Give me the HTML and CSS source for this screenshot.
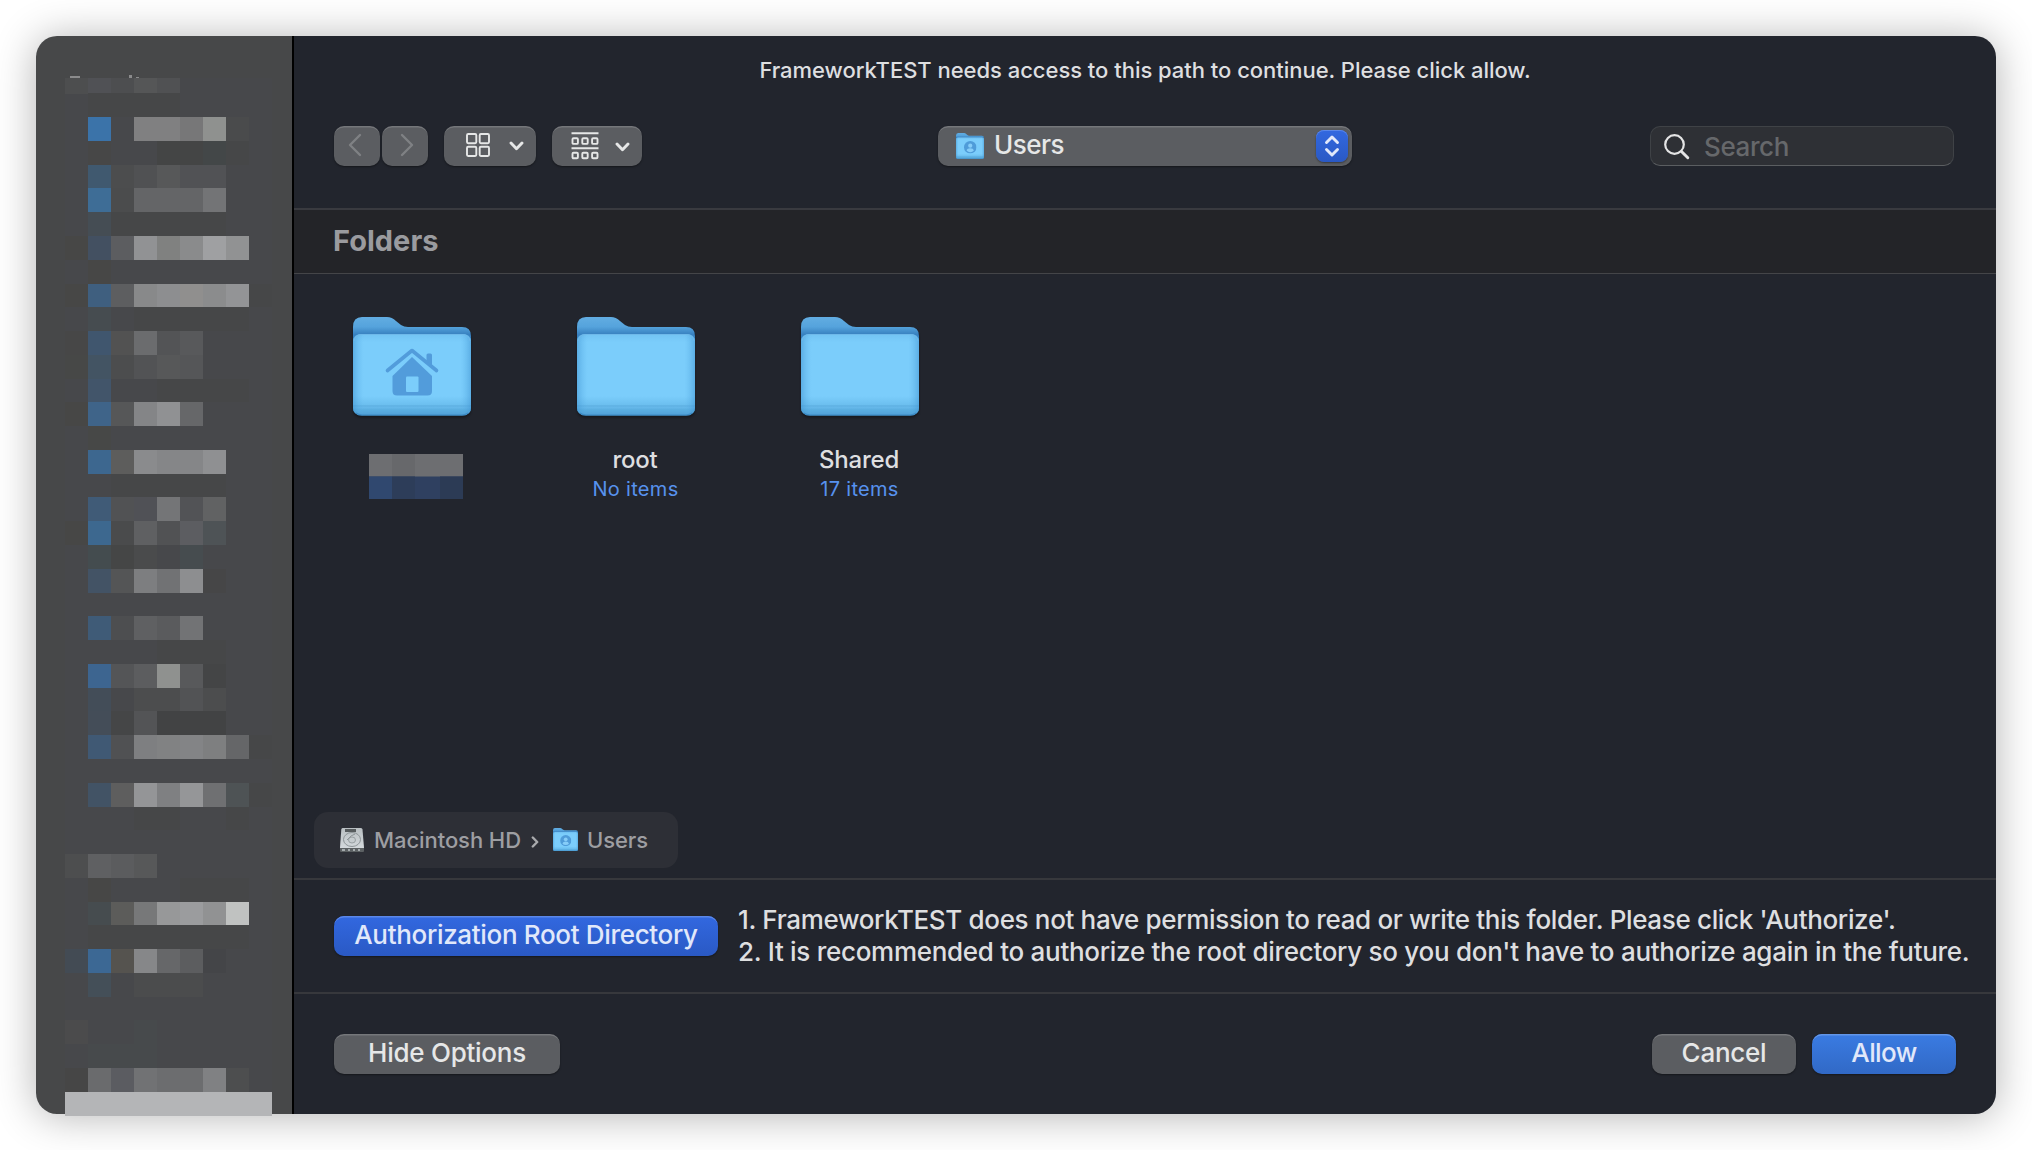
FILE: index.html
```html
<!DOCTYPE html>
<html lang="en">
<head>
<meta charset="utf-8">
<title>Open</title>
<link rel="stylesheet" href="styles.css">
</head>
<body>
<svg class="defs" aria-hidden="true">
  <defs>
    <linearGradient id="back" x1="0" y1="0" x2="0" y2="1">
      <stop offset="0" stop-color="#62ade2"/><stop offset=".1" stop-color="#55a3dc"/><stop offset=".18" stop-color="#3780bf"/><stop offset="1" stop-color="#4a9fdb"/>
    </linearGradient>
    <linearGradient id="front" x1="0" y1="0" x2="0" y2="1">
      <stop offset="0" stop-color="#72c3f3"/><stop offset=".1" stop-color="#7bcdfb"/><stop offset=".76" stop-color="#7bcdfb"/><stop offset=".87" stop-color="#6cbfef"/><stop offset=".88" stop-color="#5eb0e2"/><stop offset=".9" stop-color="#66b8ea"/><stop offset=".93" stop-color="#5aaee0"/><stop offset="1" stop-color="#509fd5"/>
    </linearGradient>
    <linearGradient id="edge" x1="0" y1="0" x2="1" y2="0">
      <stop offset="0" stop-color="#3b8fce" stop-opacity=".5"/><stop offset=".09" stop-color="#5cb2ea" stop-opacity="0"/><stop offset=".91" stop-color="#5cb2ea" stop-opacity="0"/><stop offset="1" stop-color="#3b8fce" stop-opacity=".5"/>
    </linearGradient>
    <linearGradient id="disk" x1="0" y1="0" x2="0" y2="1">
      <stop offset="0" stop-color="#b9bfc2"/><stop offset="1" stop-color="#d5dadd"/>
    </linearGradient>
    <symbol id="folder" viewBox="0 0 118 99" preserveAspectRatio="none">
      <path fill="url(#back)" d="M0 10Q0 0 9 0H34Q39 0 43 4L48 8Q51 10 55 10H109Q118 10 118 19V90Q118 98 109 98H9Q0 98 0 90Z"/>
      <path fill="url(#front)" d="M0 25Q0 17 9 17H109Q118 17 118 25V90Q118 98.500 109 98.500H9Q0 98.500 0 90Z"/>
      <path fill="url(#edge)" d="M0 25Q0 17 9 17H109Q118 17 118 25V90Q118 98.500 109 98.500H9Q0 98.500 0 90Z"/>
      <path fill="none" stroke="#6fb9ea" stroke-width="1" d="M1 24Q2 17.500 9 17.500H109Q116 17.500 117 24"/>
      <path fill="none" stroke="#3d8cc6" stroke-width="1.200" d="M3 96Q5 98 9 98H109Q113 98 115 96"/>
    </symbol>
    <symbol id="person" viewBox="0 0 12 12">
      <circle cx="6" cy="6" r="6" fill="#4f9cd9"/>
      <circle cx="6" cy="4.500" r="2" fill="#86cdf8"/>
      <path fill="#86cdf8" d="M2.500 9.200Q3 7 6 7T9.500 9.200Q8 10.700 6 10.700T2.500 9.200Z"/>
    </symbol>
    <symbol id="user-folder" viewBox="0 0 28 27" preserveAspectRatio="none">
      <use href="#folder" width="28" height="26"/>
      <use href="#person" x="8" y="8" width="12.500" height="12.500"/>
    </symbol>
    <symbol id="chevron" viewBox="0 0 15 10">
      <path fill="none" stroke="#e6e7e7" stroke-width="2.900" stroke-linecap="round" stroke-linejoin="round" d="M2 2L7.500 7.800L13 2"/>
    </symbol>
  </defs>
</svg>

<div class="window">
  <aside class="sidebar">
    <svg class="mosaic" width="207" height="1041" viewBox="0 0 207 1041" shape-rendering="crispEdges">
      <rect y="3" width="207" height="1038" fill="#47484b"/>
      <g fill="#8b8b8c"><rect x="5" y="1" width="10" height="2"/><rect x="64" y="0" width="3" height="3"/><rect x="71" y="2" width="3" height="1"/></g>
      <g transform="translate(0 3) scale(23 15.500)">
        <rect width="1" height="1" fill="#4d4e4f"/><rect x="1" width="1" height="1" fill="#505155"/><rect x="2" width="1" height="1" fill="#4d4e50"/><rect x="3" width="1" height="1" fill="#555657"/><rect x="4" width="1" height="1" fill="#505153"/>
      </g>
      <g transform="translate(0 18.400) scale(23 23.770)">
        <rect x="1" y="0" width="4" height="1" fill="#464748"/>
        <g transform="translate(0 1)"><rect x="1" width="1" height="1" fill="#3b73a9"/><rect x="3" width="2" height="1" fill="#808081"/><rect x="5" width="1" height="1" fill="#777778"/><rect x="6" width="1" height="1" fill="#8f918f"/><rect x="7" width="1" height="1" fill="#4a4b4c"/></g>
        <g transform="translate(0 2)"><rect x="1" width="1" height="1" fill="#474747"/><rect x="4" width="2" height="1" fill="#444545"/><rect x="6" width="1" height="1" fill="#434748"/><rect x="7" width="1" height="1" fill="#464748"/></g>
        <g transform="translate(0 3)"><rect x="1" width="1" height="1" fill="#40596f"/><rect x="2" width="1" height="1" fill="#4c4d4e"/><rect x="3" width="1" height="1" fill="#505153"/><rect x="4" width="1" height="1" fill="#575859"/><rect x="5" width="2" height="1" fill="#515255"/></g>
        <g transform="translate(0 4)"><rect x="1" width="1" height="1" fill="#3e6d96"/><rect x="2" width="1" height="1" fill="#4b4c4d"/><rect x="3" width="3" height="1" fill="#646567"/><rect x="6" width="1" height="1" fill="#737476"/></g>
        <g transform="translate(0 5)"><rect x="1" width="1" height="1" fill="#454d54"/><rect x="2" width="5" height="1" fill="#464748"/></g>
        <g transform="translate(0 6)"><rect width="1" height="1" fill="#474746"/><rect x="1" width="1" height="1" fill="#435061"/><rect x="2" width="1" height="1" fill="#5c5d60"/><rect x="3" width="1" height="1" fill="#919294"/><rect x="4" width="1" height="1" fill="#808180"/><rect x="5" width="1" height="1" fill="#8a8b8c"/><rect x="6" width="1" height="1" fill="#9fa0a2"/><rect x="7" width="1" height="1" fill="#919293"/></g>
        <g transform="translate(0 7)"><rect x="1" width="1" height="1" fill="#474746"/></g>
        <g transform="translate(0 8)"><rect width="1" height="1" fill="#474746"/><rect x="1" width="1" height="1" fill="#3f5f7f"/><rect x="2" width="1" height="1" fill="#5d5e60"/><rect x="3" width="1" height="1" fill="#88898a"/><rect x="4" width="1" height="1" fill="#8d8e90"/><rect x="5" width="1" height="1" fill="#908f8e"/><rect x="6" width="1" height="1" fill="#8b8c8d"/><rect x="7" width="1" height="1" fill="#939496"/><rect x="8" width="1" height="1" fill="#464748"/></g>
        <g transform="translate(0 9)"><rect x="1" width="1" height="1" fill="#464c50"/><rect x="3" width="5" height="1" fill="#464748"/></g>
        <g transform="translate(0 10)"><rect width="1" height="1" fill="#474747"/><rect x="1" width="1" height="1" fill="#40566e"/><rect x="2" width="1" height="1" fill="#525252"/><rect x="3" width="1" height="1" fill="#6b6c6e"/><rect x="4" width="1" height="1" fill="#535456"/><rect x="5" width="1" height="1" fill="#58595b"/></g>
        <g transform="translate(0 11)"><rect width="1" height="1" fill="#474847"/><rect x="1" width="1" height="1" fill="#435463"/><rect x="2" width="1" height="1" fill="#4c4d4e"/><rect x="3" width="1" height="1" fill="#525355"/><rect x="4" width="1" height="1" fill="#575859"/><rect x="5" width="1" height="1" fill="#555658"/></g>
        <g transform="translate(0 12)"><rect x="1" width="1" height="1" fill="#42556a"/><rect x="4" width="4" height="1" fill="#464748"/></g>
        <g transform="translate(0 13)"><rect width="1" height="1" fill="#474746"/><rect x="1" width="1" height="1" fill="#3f6489"/><rect x="2" width="1" height="1" fill="#565758"/><rect x="3" width="1" height="1" fill="#848587"/><rect x="4" width="1" height="1" fill="#909193"/><rect x="5" width="1" height="1" fill="#666769"/></g>
        <g transform="translate(0 14)"><rect x="1" width="1" height="1" fill="#474847"/></g>
        <g transform="translate(0 15)"><rect x="1" width="1" height="1" fill="#3d678f"/><rect x="2" width="1" height="1" fill="#5d5d5c"/><rect x="3" width="1" height="1" fill="#8a8b8d"/><rect x="4" width="2" height="1" fill="#858688"/><rect x="6" width="1" height="1" fill="#8f9092"/></g>
        <g transform="translate(0 16)"><rect x="2" width="5" height="1" fill="#464748"/></g>
        <g transform="translate(0 17)"><rect x="1" width="1" height="1" fill="#405b77"/><rect x="2" width="1" height="1" fill="#515254"/><rect x="3" width="1" height="1" fill="#505156"/><rect x="4" width="1" height="1" fill="#747577"/><rect x="5" width="1" height="1" fill="#525356"/><rect x="6" width="1" height="1" fill="#616263"/></g>
        <g transform="translate(0 18)"><rect width="1" height="1" fill="#474746"/><rect x="1" width="1" height="1" fill="#3d688f"/><rect x="2" width="1" height="1" fill="#4a4b4c"/><rect x="3" width="1" height="1" fill="#5f6062"/><rect x="4" width="1" height="1" fill="#515254"/><rect x="5" width="1" height="1" fill="#5c5d61"/><rect x="6" width="1" height="1" fill="#4e5356"/></g>
        <g transform="translate(0 19)"><rect x="1" width="1" height="1" fill="#444c4f"/><rect x="2" width="1" height="1" fill="#454646"/><rect x="3" width="1" height="1" fill="#4a4b4c"/><rect x="5" width="1" height="1" fill="#464c4f"/></g>
        <g transform="translate(0 20)"><rect x="1" width="1" height="1" fill="#435365"/><rect x="2" width="1" height="1" fill="#545556"/><rect x="3" width="1" height="1" fill="#7d7e80"/><rect x="4" width="1" height="1" fill="#717274"/><rect x="5" width="1" height="1" fill="#8d8e90"/><rect x="6" width="1" height="1" fill="#464647"/></g>
        <g transform="translate(0 22)"><rect x="1" width="1" height="1" fill="#3f5b77"/><rect x="2" width="1" height="1" fill="#4d4e50"/><rect x="3" width="1" height="1" fill="#5f6062"/><rect x="4" width="1" height="1" fill="#5a5b5d"/><rect x="5" width="1" height="1" fill="#727375"/></g>
        <g transform="translate(0 23)"><rect x="4" width="3" height="1" fill="#464748"/></g>
        <g transform="translate(0 24)"><rect x="1" width="1" height="1" fill="#3d6590"/><rect x="2" width="1" height="1" fill="#545557"/><rect x="3" width="1" height="1" fill="#5c5d5f"/><rect x="4" width="1" height="1" fill="#8f918f"/><rect x="5" width="1" height="1" fill="#58595b"/><rect x="6" width="1" height="1" fill="#444546"/></g>
        <g transform="translate(0 25)"><rect x="1" width="1" height="1" fill="#434d58"/><rect x="3" width="2" height="1" fill="#4c4d4e"/><rect x="5" width="1" height="1" fill="#525355"/><rect x="6" width="1" height="1" fill="#4c4d4e"/></g>
        <g transform="translate(0 26)"><rect x="1" width="1" height="1" fill="#444d58"/><rect x="2" width="1" height="1" fill="#454647"/><rect x="3" width="1" height="1" fill="#535456"/><rect x="4" width="3" height="1" fill="#424344"/></g>
        <g transform="translate(0 27)"><rect x="1" width="1" height="1" fill="#405974"/><rect x="2" width="1" height="1" fill="#505153"/><rect x="3" width="1" height="1" fill="#7e7f81"/><rect x="4" width="1" height="1" fill="#818283"/><rect x="5" width="1" height="1" fill="#838486"/><rect x="6" width="1" height="1" fill="#7e7f80"/><rect x="7" width="1" height="1" fill="#656668"/><rect x="8" width="1" height="1" fill="#464748"/></g>
        <g transform="translate(0 29)"><rect x="1" width="1" height="1" fill="#425365"/><rect x="2" width="1" height="1" fill="#5e5e5e"/><rect x="3" width="1" height="1" fill="#949597"/><rect x="4" width="1" height="1" fill="#7f8082"/><rect x="5" width="1" height="1" fill="#959698"/><rect x="6" width="1" height="1" fill="#6f7072"/><rect x="7" width="1" height="1" fill="#4e5355"/><rect x="8" width="1" height="1" fill="#464748"/></g>
        <g transform="translate(0 30)"><rect x="3" width="2" height="1" fill="#464748"/><rect x="7" width="1" height="1" fill="#464748"/></g>
        <g transform="translate(0 32)"><rect width="1" height="1" fill="#4d4e4f"/><rect x="1" width="1" height="1" fill="#5f6062"/><rect x="2" width="1" height="1" fill="#5b5c5e"/><rect x="3" width="1" height="1" fill="#575859"/></g>
        <g transform="translate(0 33)"><rect x="1" width="1" height="1" fill="#474746"/><rect x="5" width="3" height="1" fill="#464748"/></g>
        <g transform="translate(0 34)"><rect x="1" width="1" height="1" fill="#464c4f"/><rect x="2" width="1" height="1" fill="#5c5c5a"/><rect x="3" width="1" height="1" fill="#777879"/><rect x="4" width="1" height="1" fill="#979899"/><rect x="5" width="1" height="1" fill="#9b9c9e"/><rect x="6" width="1" height="1" fill="#919293"/><rect x="7" width="1" height="1" fill="#c0c2c1"/></g>
        <g transform="translate(0 35)"><rect x="1" width="7" height="1" fill="#464748"/></g>
        <g transform="translate(0 36)"><rect width="1" height="1" fill="#434b54"/><rect x="1" width="1" height="1" fill="#3c6894"/><rect x="2" width="1" height="1" fill="#55534f"/><rect x="3" width="1" height="1" fill="#868789"/><rect x="4" width="1" height="1" fill="#666769"/><rect x="5" width="1" height="1" fill="#5c5d5f"/><rect x="6" width="1" height="1" fill="#444548"/></g>
        <g transform="translate(0 37)"><rect x="1" width="1" height="1" fill="#444f58"/><rect x="3" width="3" height="1" fill="#4b4c4d"/></g>
        <g transform="translate(0 39)"><rect width="1" height="1" fill="#4b4b4c"/><rect x="3" width="1" height="1" fill="#474a4c"/></g>
        <g transform="translate(0 40)"><rect x="1" width="3" height="1" fill="#474a4c"/></g>
        <g transform="translate(0 41)"><rect width="1" height="1" fill="#464646"/><rect x="1" width="1" height="1" fill="#6a6b6d"/><rect x="2" width="1" height="1" fill="#5b5c61"/><rect x="3" width="1" height="1" fill="#717274"/><rect x="4" width="2" height="1" fill="#6c6d6f"/><rect x="6" width="1" height="1" fill="#808183"/><rect x="7" width="1" height="1" fill="#4d4e4f"/></g>
        <rect y="42" width="9" height="1.020" fill="#b4b5b7"/>
      </g>
    </svg>
  </aside>

  <main class="main">
    <p class="message">FrameworkTEST needs access to this path to continue. Please click allow.</p>
    <div class="toolbar">
      <div class="nav">
        <button class="btn nav-btn"><svg width="14" height="24" viewBox="0 0 14 24"><path d="M12 2L2 12L12 22"/></svg></button>
        <button class="btn nav-btn nav-next"><svg width="14" height="24" viewBox="0 0 14 24"><path d="M2 2L12 12L2 22"/></svg></button>
      </div>
      <button class="btn view-btn">
        <svg width="24" height="24" viewBox="0 0 24 24" fill="none" stroke="#e6e7e7" stroke-width="1.900"><rect x="1" y="1" width="9.300" height="9.300" rx="1.200"/><rect x="13.700" y="1" width="9.300" height="9.300" rx="1.200"/><rect x="1" y="13.700" width="9.300" height="9.300" rx="1.200"/><rect x="13.700" y="13.700" width="9.300" height="9.300" rx="1.200"/></svg>
        <svg class="chev" width="15" height="10"><use href="#chevron"/></svg>
      </button>
      <button class="btn group-btn">
        <svg width="28" height="28" viewBox="0 0 28 28" fill="none" stroke="#e6e7e7" stroke-width="1.900"><path d="M.5 1.200H27.500M.5 16.200H27.500"/><rect x="1.500" y="6.300" width="5.400" height="5.600" rx="1"/><rect x="11.300" y="6.300" width="5.400" height="5.600" rx="1"/><rect x="21.100" y="6.300" width="5.400" height="5.600" rx="1"/><rect x="1.500" y="20.700" width="5.400" height="5.600" rx="1"/><rect x="11.300" y="20.700" width="5.400" height="5.600" rx="1"/><rect x="21.100" y="20.700" width="5.400" height="5.600" rx="1"/></svg>
        <svg class="chev" width="15" height="10"><use href="#chevron"/></svg>
      </button>
      <button class="btn popup">
        <svg width="28" height="27"><use href="#user-folder"/></svg>
        <span class="popup-label">Users</span>
        <span class="stepper"><svg width="16" height="24" viewBox="0 0 16 24"><path d="M2.500 8.500L8 3L13.500 8.500M2.500 15.500L8 21L13.500 15.500"/></svg></span>
      </button>
      <div class="search">
        <svg width="26" height="26" viewBox="0 0 26 26" fill="none" stroke="#e4e4e5"><circle cx="10.500" cy="10.500" r="9.300" stroke-width="2.200"/><path stroke-width="2.900" stroke-linecap="round" d="M17.500 17.500L23.800 23.800"/></svg>
        <span>Search</span>
      </div>
    </div>
    <h2 class="section">Folders</h2>

    <div class="browser">
      <div class="files">
        <div class="file">
          <svg class="folder" width="118" height="99" viewBox="0 0 118 99">
            <use href="#folder" width="118" height="99"/>
            <g fill="#529cdb" stroke="none">
              <path d="M59 40L79 59V74Q79 78.500 74.500 78.500H44Q39.500 78.500 39.500 74V59Z"/>
              <path fill="none" stroke="#529cdb" stroke-width="3.600" stroke-linecap="round" stroke-linejoin="round" d="M34.500 53.500L59 33.500L83.500 53.500"/>
              <path d="M73.500 38Q73.500 36.500 75 36.500H77.500Q79 36.500 79 38V49L73.500 44.500Z"/>
              <rect x="53" y="59.500" width="12.500" height="15.500" rx="1" fill="#7bcdfb"/>
            </g>
          </svg>
          <svg class="hidden-name" width="94" height="45" viewBox="0 0 94 45"><rect width="94" height="23" fill="#6d6e71"/><rect x="23" width="23" height="23" fill="#67686b"/><rect y="22.500" width="94" height="22.500" fill="#2f4060"/><rect y="22.500" width="23" height="22.500" fill="#30486f"/><rect x="23" y="22.500" width="23" height="22.500" fill="#2d3d59"/><rect x="71" y="22.500" width="23" height="22.500" fill="#2c3b55"/></svg>
        </div>
        <div class="file">
          <svg class="folder" width="118" height="99"><use href="#folder"/></svg>
          <span class="name">root</span><span class="count">No items</span>
        </div>
        <div class="file">
          <svg class="folder" width="118" height="99"><use href="#folder"/></svg>
          <span class="name">Shared</span><span class="count">17 items</span>
        </div>
      </div>
      <nav class="path">
        <svg class="disk" width="26" height="26" viewBox="0 0 26 26">
          <path fill="url(#disk)" d="M3.500 1H22Q23.300 1 23.500 2.500L25 20.500V22H1V20.500L2.300 2.500Q2.500 1 3.500 1Z"/>
          <path fill="#5c6163" d="M1 21H25V24Q25 25 24 25H2Q1 25 1 24Z"/>
          <path fill="#a5abad" d="M3 22H6V24H3ZM9 22H11V24H9ZM14 22H16V24H14ZM19 22H21V24H19Z"/>
          <rect x="6" y="2" width="11" height="3" fill="#565b5d"/>
          <ellipse cx="13" cy="12.500" rx="8.500" ry="7" fill="none" stroke="#8d9497" stroke-width="1"/>
          <ellipse cx="13" cy="13" rx="3.500" ry="3" fill="#c6cccf" stroke="#8d9497" stroke-width=".8"/>
          <path fill="none" stroke="#8d9497" stroke-width="1" d="M16 7Q12 8 8 13"/>
        </svg>
        <span class="crumb">Macintosh HD</span>
        <svg class="sep" width="8" height="12" viewBox="0 0 8 12"><path d="M1.800 1.500L6.200 6L1.800 10.500"/></svg>
        <svg class="path-folder" width="25" height="24"><use href="#user-folder"/></svg>
        <span class="crumb">Users</span>
      </nav>
    </div>

    <div class="options">
      <button class="btn primary auth"><span>Authorization Root Directory</span></button>
      <div class="notes">
        <p class="note-1">1. FrameworkTEST does not have permission to read or write this folder. Please click 'Authorize'.</p>
        <p class="note-2">2. It is recommended to authorize the root directory so you don't have to authorize again in the future.</p>
      </div>
    </div>

    <footer class="footer">
      <button class="btn hide"><span>Hide Options</span></button>
      <button class="btn cancel"><span>Cancel</span></button>
      <button class="btn allow"><span>Allow</span></button>
    </footer>
  </main>
</div>
</body>
</html>
```
FILE: styles.css
```css
* { box-sizing: border-box; margin: 0; padding: 0; }

body {
  width: 2032px;
  height: 1150px;
  padding: 36px;
  overflow: hidden;
  background: #fff;
  font-family: Inter, "Liberation Sans", sans-serif;
  font-size: 26px;
  font-weight: 450;
  color: #dedfe0;
}

svg { display: block; flex: none; }
.defs { position: absolute; width: 0; height: 0; }

.window {
  display: flex;
  width: 1960px;
  height: 1078px;
  border-radius: 21px;
  box-shadow: 0 2px 42px rgba(0, 0, 0, .3);
}

.sidebar {
  flex: none;
  width: 258px;
  padding: 39px 0 0 29px;
  background: #474849;
  border-right: 2px solid #000;
  border-radius: 21px 0 0 21px;
}

.main {
  flex: 1;
  min-width: 0;
  display: flex;
  flex-direction: column;
  background: #22252d;
  border-radius: 0 21px 21px 0;
}

.message {
  height: 68px;
  line-height: 68px;
  text-align: center;
  font-size: 22px;
  font-weight: 500;
  letter-spacing: -.03px;
}

.btn {
  display: flex;
  align-items: center;
  justify-content: center;
  height: 40px;
  border: 0;
  border-radius: 10px;
  background: #5b5d61;
  box-shadow: inset 0 2px 0 -.5px rgba(255, 255, 255, .16), 0 1px 2px rgba(0, 0, 0, .4);
  font: inherit;
  color: #e6e7e7;
  white-space: nowrap;
}
.btn > span { line-height: 40px; padding-bottom: 3px; }

.toolbar {
  display: flex;
  height: 106px;
  padding: 22px 42px 0 40px;
  border-bottom: 2px solid #393a3f;
}
.nav { display: flex; gap: 2px; margin-right: 16px; }
.nav-btn { width: 46px; padding: 0 4px 2px 0; }
.nav-next { padding: 0 0 2px 4px; }
.nav-btn path { fill: none; stroke: #7f8184; stroke-width: 2.4; stroke-linecap: round; stroke-linejoin: round; }
.view-btn { width: 92px; justify-content: space-between; padding: 0 12px 2px 22px; margin-right: 16px; }
.group-btn { width: 90px; justify-content: space-between; padding: 0 12px 1px 19px; margin-right: 296px; }
.chev { margin-top: 2px; }

.popup { width: 414px; justify-content: flex-start; padding: 0 4px 0 18px; }
.popup .popup-label { margin-left: 10px; padding-bottom: 3px; letter-spacing: -.5px; }
.popup .stepper {
  display: flex;
  align-items: center;
  justify-content: center;
  width: 32px;
  height: 32px;
  margin-left: auto;
  padding: 0;
  border-radius: 8px;
  background: linear-gradient(#3268e0, #2a59c4);
  box-shadow: inset 0 1px 0 #5b87e8, 0 1px 2px rgba(0, 0, 0, .4);
}
.stepper path { fill: none; stroke: #e1e8fa; stroke-width: 2.9; stroke-linecap: round; stroke-linejoin: round; }

.search {
  display: flex;
  align-items: center;
  width: 304px;
  height: 40px;
  margin-left: auto;
  padding: 1px 0 0 13px;
  border: 1px solid #3f4246;
  border-bottom: 1px solid #5b5e61;
  border-radius: 10px;
  background: #2e3035;
  color: #66686b;
  letter-spacing: -.4px;
}
.search span { margin-left: 14px; line-height: 38px; }

.section {
  height: 64px;
  padding-left: 39px;
  border-bottom: 1px solid #444548;
  background: #232428;
  color: #9a9b9f;
  font-size: 29px;
  font-weight: 700;
  line-height: 62px;
}

.browser {
  display: flex;
  flex-direction: column;
  justify-content: space-between;
  align-items: flex-start;
  height: 606px;
  padding: 43px 0 10px;
  border-bottom: 2px solid #37383c;
}
.files { display: flex; padding-left: 6px; }
.file { display: flex; flex-direction: column; align-items: center; width: 224px; }
.folder { filter: drop-shadow(0 2px 1px rgba(0, 0, 0, .35)); }
.name { margin: 29px 2px 0 0; line-height: 30px; font-size: 24px; letter-spacing: -.2px; }
.count { margin-right: 1px; line-height: 28px; font-size: 20px; font-weight: 400; letter-spacing: .3px; color: #5792ee; }
.hidden-name { margin: 38px 0 0 8px; }

.path {
  display: flex;
  align-items: center;
  width: 364px;
  height: 56px;
  margin-left: 20px;
  padding-left: 25px;
  border-radius: 14px;
  background: #2d2f36;
  color: #9d9ea2;
  font-size: 22px;
}
.disk { margin-right: 9px; }
.crumb { line-height: 56px; letter-spacing: -.07px; white-space: nowrap; }
.sep { margin: 3px 14px 0 10px; }
.sep path { fill: none; stroke: #a9aaad; stroke-width: 2.4; stroke-linecap: round; stroke-linejoin: round; }
.path-folder { margin-right: 9px; }

.options {
  display: flex;
  align-items: center;
  height: 114px;
  padding-left: 40px;
  border-bottom: 2px solid #37383c;
}
.primary, .allow { color: #e1e8fa; }
.primary { background: linear-gradient(#3268e0, #2a59c4); box-shadow: inset 0 2px 0 -.5px #5b87e8, 0 1px 2px rgba(0, 0, 0, .4); }
.auth { width: 384px; letter-spacing: -.33px; }
.notes { margin-left: 20px; line-height: 32px; white-space: nowrap; }
.note-1 { letter-spacing: -.34px; }
.note-2 { letter-spacing: -.29px; }

.footer { display: flex; flex: 1; padding: 40px 40px 0; }
.hide { width: 226px; letter-spacing: -.25px; }
.cancel { width: 144px; margin-left: auto; letter-spacing: -.25px; }
.allow {
  width: 144px;
  margin-left: 16px;
  letter-spacing: -.6px;
  background: linear-gradient(#3a7be2, #3169c6);
  box-shadow: inset 0 2px 0 -.5px #6396e8, 0 1px 2px rgba(0, 0, 0, .4);
}
```
